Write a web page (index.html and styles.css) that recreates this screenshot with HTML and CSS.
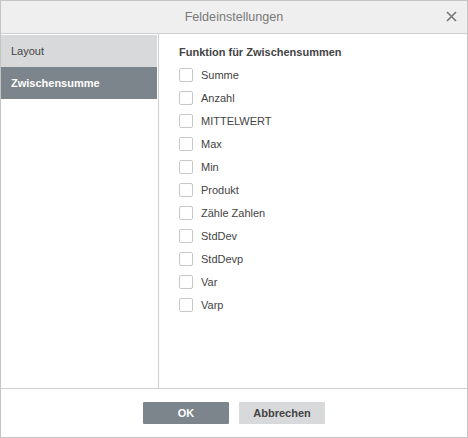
FILE: index.html
```html
<!DOCTYPE html>
<html lang="de">
<head>
<meta charset="utf-8">
<link rel="stylesheet" href="styles.css">
</head>
<body>
<div class="dialog">
  <div class="header">
    <span class="title">Feldeinstellungen</span>
    <span class="close" aria-label="Schließen">
      <svg width="11" height="11" viewBox="0 0 11 11"><path d="M1 1 L10 10 M10 1 L1 10" stroke="#777" stroke-width="1.6" fill="none"/></svg>
    </span>
  </div>
  <div class="body">
    <div class="sidebar">
      <div class="tab">Layout</div>
      <div class="tab active">Zwischensumme</div>
    </div>
    <div class="content">
      <div class="heading">Funktion für Zwischensummen</div>
      <ul class="list">
        <li><span class="box"></span>Summe</li>
        <li><span class="box"></span>Anzahl</li>
        <li><span class="box"></span>MITTELWERT</li>
        <li><span class="box"></span>Max</li>
        <li><span class="box"></span>Min</li>
        <li><span class="box"></span>Produkt</li>
        <li><span class="box"></span>Zähle Zahlen</li>
        <li><span class="box"></span>StdDev</li>
        <li><span class="box"></span>StdDevp</li>
        <li><span class="box"></span>Var</li>
        <li><span class="box"></span>Varp</li>
      </ul>
    </div>
  </div>
  <div class="footer">
    <button class="btn primary">OK</button>
    <button class="btn secondary">Abbrechen</button>
  </div>
</div>
</body>
</html>
```
FILE: styles.css
```css
* { box-sizing: border-box; }
html, body { margin: 0; padding: 0; background: #fff; }
body { font-family: Arial, "Liberation Sans", sans-serif; font-size: 11px; color: #444; }
.dialog {
  width: 468px; height: 438px;
  border: 1px solid #c4c4c4;
  display: flex; flex-direction: column;
  background: #fff;
}
.header {
  height: 33px; flex: none;
  background: #efefef;
  border-bottom: 1px solid #cfcfcf;
  display: flex; align-items: center; justify-content: center;
  position: relative;
}
.title { font-size: 12.6px; color: #7a7a7a; }
.close { position: absolute; right: 10px; top: 10px; width: 11px; height: 11px; display: block; line-height: 0; }
.body { flex: 1; display: flex; min-height: 0; }
.sidebar {
  width: 158px; flex: none;
  border-right: 1px solid #cfcfcf;
  padding-top: 1px;
}
.tab {
  height: 32px; line-height: 32px;
  padding-left: 10px;
  background: #d8d9db;
  color: #444;
  margin-right: 1px;
}
.tab.active { background: #7d858c; color: #fff; font-weight: bold; }
.content { flex: 1; padding: 11px 0 0 20px; }
.heading { font-weight: bold; height: 14px; line-height: 14px; margin-bottom: 4px; }
.list { list-style: none; margin: 0; padding: 0; }
.list li { height: 23px; display: flex; align-items: center; }
.box {
  width: 14px; height: 14px;
  border: 1px solid #c8c8c8; border-radius: 2px;
  margin-right: 8px; background: #fff;
}
.footer {
  height: 49px; flex: none;
  border-top: 1px solid #cfcfcf;
  display: flex; justify-content: center; align-items: center; gap: 10px;
  padding-bottom: 1px;
}
.btn {
  width: 86px; height: 22px;
  border: none; border-radius: 1px;
  font-family: Arial, "Liberation Sans", sans-serif;
  font-size: 11px; font-weight: bold;
  padding: 0;
}
.primary { background: #7d858c; color: #fff; }
.secondary { background: #d8d9db; color: #444; }
```
